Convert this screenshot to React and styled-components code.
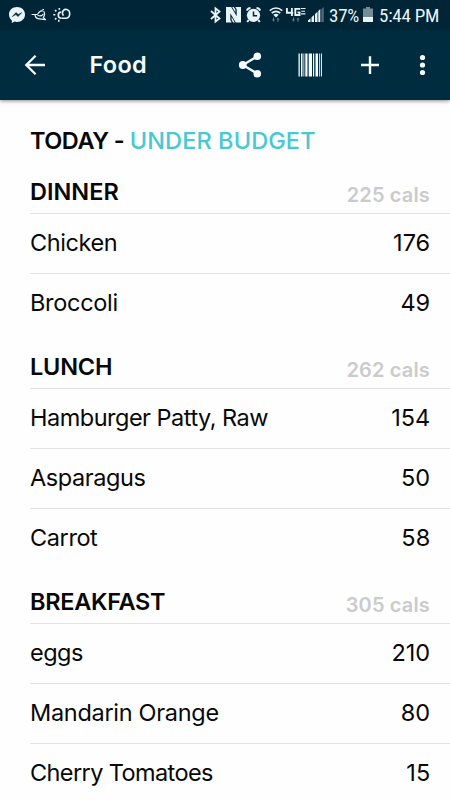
import React from 'react';
import styled, { createGlobalStyle } from 'styled-components';

const GlobalStyle = createGlobalStyle`
  * { box-sizing: border-box; }
  body {
    margin: 0;
    background: #fefefe;
    color: #080808;
    font-family: Inter, "Open Sans", sans-serif;
  }
`;

const Screen = styled.div`
  width: 450px;
  height: 800px;
  overflow: hidden;
  background: #fefefe;
`;

const TopArea = styled.header`
  height: 100px;
  background: #002c3f;
  box-shadow: 0 1px 4px rgba(0, 0, 0, 0.45);
`;

const StatusBar = styled.div`
  display: flex;
  height: 30px;
  padding: 0 11px 0 8px;
  justify-content: space-between;
  background: #002536;
  color: #e9f4f8;
`;

const StatusGroup = styled.div`
  display: flex;
  align-items: center;
`;

const StatusIcon = styled.svg`
  display: block;
  flex: none;
  width: ${(p) => p.$w}px;
  height: 30px;
  margin-right: ${(p) => p.$after || 0}px;
`;

const StatusText = styled.span`
  width: ${(p) => p.$w}px;
  margin-right: ${(p) => p.$after || 0}px;
  padding-top: 1px;
  font: 400 19px/30px "Roboto Condensed", Roboto, sans-serif;
  letter-spacing: -0.25px;
  white-space: nowrap;
`;

const AppBar = styled.div`
  display: flex;
  align-items: center;
  height: 70px;
  padding: 0 12px 0 20px;
  color: #f6fbfd;
`;

const IconButton = styled.button`
  display: flex;
  align-items: center;
  justify-content: center;
  width: 30px;
  height: 30px;
  padding: 0;
  border: 0;
  background: none;
  color: inherit;
`;

const BarTitle = styled.h1`
  flex: 1;
  margin: 0 0 0 39.500px;
  font-size: 23.500px;
  font-weight: 600;
  line-height: 30px;
  letter-spacing: 0.3px;
`;

const Actions = styled.div`
  display: flex;
  gap: 30px;
`;

const LastAction = styled.div`
  margin-left: -7px;
`;

const Content = styled.main`
  padding-left: 30px;
`;

const Summary = styled.h2`
  height: 58px;
  margin: 0;
  padding-top: 23px;
  font-size: 23.500px;
  font-weight: 600;
  line-height: 36px;
  letter-spacing: -0.5px;
  white-space: pre;
`;

const Budget = styled.span`
  color: #49c8d1;
  font-weight: 550;
  letter-spacing: 0.1px;
`;

const MealHeader = styled.div`
  display: flex;
  align-items: flex-end;
  justify-content: space-between;
  height: 56px;
  padding-right: 20px;
  border-bottom: 1px solid #e3e3e3;
`;

const MealName = styled.h3`
  margin: 0 0 7px;
  font-size: 23.500px;
  font-weight: 600;
  line-height: 28px;
  letter-spacing: ${(p) => p.$track}px;
`;

const MealTotal = styled.span`
  margin-bottom: 5px;
  color: #cbcbcb;
  font-size: 20px;
  font-weight: 600;
  line-height: 26px;
  letter-spacing: 0.15px;
`;

const Meal = styled.section`
  margin-bottom: -1px;
`;

const FoodRow = styled.div`
  display: flex;
  align-items: center;
  justify-content: space-between;
  height: 60px;
  padding: 0 20px 1px 0;
  border-bottom: 1px solid #e3e3e3;
  font-size: 23.500px;
  line-height: 30px;

  &:last-child {
    border-bottom-color: transparent;
  }
`;

const FoodName = styled.span`
  letter-spacing: ${(p) => p.$track}px;
`;

const Calories = styled.span`
  margin-right: -0.2px;
`;

const meals = [
  {
    name: 'DINNER', track: 0, total: '225 cals',
    foods: [['Chicken', -0.4, '176'], ['Broccoli', -0.3, '49']],
  },
  {
    name: 'LUNCH', track: -0.2, total: '262 cals',
    foods: [['Hamburger Patty, Raw', -0.5, '154'], ['Asparagus', -0.4, '50'], ['Carrot', -0.4, '58']],
  },
  {
    name: 'BREAKFAST', track: -0.3, total: '305 cals',
    foods: [['eggs', -0.5, '210'], ['Mandarin Orange', -0.3, '80'], ['Cherry Tomatoes', -0.6, '15']],
  },
];

const Messenger = () => (
  <StatusIcon $w={18} $after={5} viewBox="0 0 18 30">
    <path d="M9 7C4.300 7 1 10.200 1 14.400c0 2.500 1.100 4.400 2.800 5.800V23l2.800-1.400c.8.2 1.600.3 2.400.3 4.600 0 8-3.300 8-7.500S13.600 7 9 7Z" fill="currentColor" />
    <path d="m4.300 16.600 3.700-4 2.200 2 3.500-2-3.600 4-2.200-2Z" fill="#002536" stroke="#002536" strokeWidth=".5" />
  </StatusIcon>
);

const Bird = () => (
  <StatusIcon $w={16} $after={6} viewBox="0 0 16 30" fill="none" stroke="currentColor" strokeWidth="1.200" strokeLinecap="round" strokeLinejoin="round">
    <path d="M1 14.500h5q1.200-.2 1.600-1.800l1.700-1.500q.8-.6 1.700 0M4 14.800c.3 2.300 2 4 4.700 4.100l5.800.7-2.200-2.300c1.500-1.600 1.500-3.800.6-5.800" />
    <path d="M7 15.500q3.200 1.200 5-1.200M11 10.300l1.500-.8" />
  </StatusIcon>
);

const Weather = () => (
  <StatusIcon $w={18} viewBox="0 0 18 30" fill="none" stroke="currentColor" strokeWidth="1.600">
    <path d="M8.500 18.200h4.800a3.700 4.400 0 1 0-3.800-5.900q-.5 1.900 1 3.300" />
    <path d="M8.300 12a3.100 3.100 0 1 0 .2 6.200" />
    <path d="M6.300 8v1.800M5.800 19.800v1.900M.300 14.800h2M2 10l1.400 1.400M2 19.500l1.400-1.400" />
  </StatusIcon>
);

const Bluetooth = () => (
  <StatusIcon $w={11} $after={5} viewBox="0 0 11 30" fill="none" stroke="currentColor" strokeWidth="1.800">
    <path d="m1 11 8.500 7.500-4 3.200V8.300l4 3.200L1 19" />
  </StatusIcon>
);

const Nfc = () => (
  <StatusIcon $w={15} $after={5} viewBox="0 0 15 30">
    <path d="M0 7h5.200l5.500 9.300V9.400L9.300 7H15v15.500H9.800L4.300 13.200v6.900l1.400 2.400H0Z" fill="currentColor" />
    <path d="M6.200 7h1.600l1.600 2.600v2.900ZM8.800 22.500H7.200l-1.600-2.600V17Z" fill="currentColor" />
  </StatusIcon>
);

const Alarm = () => (
  <StatusIcon $w={15} $after={8} viewBox="0 0 15 30">
    <circle cx="7.500" cy="15.300" r="6.600" fill="currentColor" />
    <path d="M.800 10.600A4 4 0 0 1 4.500 8M14.200 10.600A4 4 0 0 0 10.500 8M2.700 20l-1.500 2M12.300 20l1.500 2" fill="none" stroke="currentColor" strokeWidth="2" />
    <path d="M7.500 11.500v4.200h3.600" fill="none" stroke="#002536" strokeWidth="1.500" />
  </StatusIcon>
);

const DataArrows = ({ x }) => (
  <g fill="#67838f" transform={`translate(${x} 0)`}>
    <path d="M1.500 21.700 0 19.600h1v-2.100h1v2.100h1ZM6 17.400l1.500 2.200h-1v2.100h-1v-2.100h-1Z" />
  </g>
);

const Wifi = () => (
  <StatusIcon $w={14} $after={3} viewBox="0 0 14 30">
    <path d="M.700 10.600q6.300-5.200 12.600 0M2.700 13.100q4.300-3.600 8.600 0" fill="none" stroke="currentColor" strokeWidth="1.600" />
    <path d="M4.300 14.800q2.700-2 5.400 0L7 17.400Z" fill="currentColor" />
    <DataArrows x={3} />
  </StatusIcon>
);

const FourG = () => (
  <StatusIcon $w={20} $after={2} viewBox="0 0 20 30">
    <g fill="none" stroke="currentColor" strokeWidth="1.900">
      <path d="M.900 8v4.700h6.300M5.900 8v8M14.300 8.900H9.300v6.100h4.200v-2.600h-2" />
      <path d="M15 8.500h4.500M15.300 11.200h3.700M15 13.900h4.500" strokeWidth="1.100" />
    </g>
    <DataArrows x={6} />
  </StatusIcon>
);

const Signal = () => (
  <StatusIcon $w={16} $after={5} viewBox="0 0 16 30">
    <path d="M0 22v-1.500l2.500-2.300V22ZM3.500 22v-4.700L6 15V22ZM7 22v-7.900l2.500-2.300V22ZM10.300 22V11l2-1.900V22Z" fill="currentColor" />
    <path d="M13.300 22V9.300L15.800 7v15Z" fill="#486c7b" />
  </StatusIcon>
);

const Battery = () => (
  <StatusIcon $w={10} $after={6} viewBox="0 0 10 30">
    <path d="M3 7h4v1.500h3V17H0V8.500h3Z" fill="#758b96" />
    <path d="M0 17h10v5H0Z" fill="currentColor" />
  </StatusIcon>
);

const BackArrow = () => (
  <svg width="30" height="30" viewBox="0 0 30 30" fill="none" stroke="currentColor" strokeWidth="2.300">
    <path d="M25 15H7M15.600 5.700 6.300 15l9.300 9.300" />
  </svg>
);

const Share = () => (
  <svg width="30" height="30" viewBox="0 0 30 30" fill="currentColor">
    <path d="M22.300 6.300 7.800 15l14.500 8.700" fill="none" stroke="currentColor" strokeWidth="2.300" />
    <circle cx="22.300" cy="6.300" r="3.800" />
    <circle cx="7.800" cy="15" r="3.900" />
    <circle cx="22.300" cy="23.700" r="3.800" />
  </svg>
);

const Barcode = () => (
  <svg width="30" height="30" viewBox="0 0 30 30" fill="currentColor">
    <path d="M3.500 3.500h1.300v23H3.500ZM6 3.500h1.500v23H6ZM8.500 3.500h.8v23h-.8ZM10.300 3.500h2.200v23h-2.200ZM13.700 3.500h3.300v23h-3.300ZM18 3.500h1.200v23H18ZM20.500 3.500h2.500v23h-2.500ZM24.200 3.500h.9v23h-.9ZM26 3.500h.9v23H26Z" />
  </svg>
);

const Plus = () => (
  <svg width="30" height="30" viewBox="0 0 30 30" fill="currentColor">
    <path d="M13.800 6.200h2.400v7.600H24v2.400h-7.800V24h-2.400v-7.800H6v-2.400h7.800Z" />
  </svg>
);

const More = () => (
  <svg width="30" height="30" viewBox="0 0 30 30" fill="currentColor">
    <circle cx="14.500" cy="7.500" r="2.600" />
    <circle cx="14.500" cy="15" r="2.600" />
    <circle cx="14.500" cy="22.500" r="2.600" />
  </svg>
);

export default function App() {
  return (
    <Screen>
      <GlobalStyle />
      <TopArea>
        <StatusBar>
          <StatusGroup>
            <Messenger />
            <Bird />
            <Weather />
          </StatusGroup>
          <StatusGroup>
            <Bluetooth />
            <Nfc />
            <Alarm />
            <Wifi />
            <FourG />
            <Signal />
            <StatusText $w={31} $after={3}>37%</StatusText>
            <Battery />
            <StatusText $w={60}>5:44 PM</StatusText>
          </StatusGroup>
        </StatusBar>
        <AppBar>
          <IconButton aria-label="Back"><BackArrow /></IconButton>
          <BarTitle>Food</BarTitle>
          <Actions>
            <IconButton aria-label="Share"><Share /></IconButton>
            <IconButton aria-label="Scan barcode"><Barcode /></IconButton>
            <IconButton aria-label="Add food"><Plus /></IconButton>
            <LastAction>
              <IconButton aria-label="More options"><More /></IconButton>
            </LastAction>
          </Actions>
        </AppBar>
      </TopArea>
      <Content>
        <Summary>TODAY - <Budget>UNDER BUDGET</Budget></Summary>
        {meals.map((meal) => (
          <Meal key={meal.name}>
            <MealHeader>
              <MealName $track={meal.track}>{meal.name}</MealName>
              <MealTotal>{meal.total}</MealTotal>
            </MealHeader>
            {meal.foods.map(([name, track, calories]) => (
              <FoodRow key={name}>
                <FoodName $track={track}>{name}</FoodName>
                <Calories>{calories}</Calories>
              </FoodRow>
            ))}
          </Meal>
        ))}
      </Content>
    </Screen>
  );
}
